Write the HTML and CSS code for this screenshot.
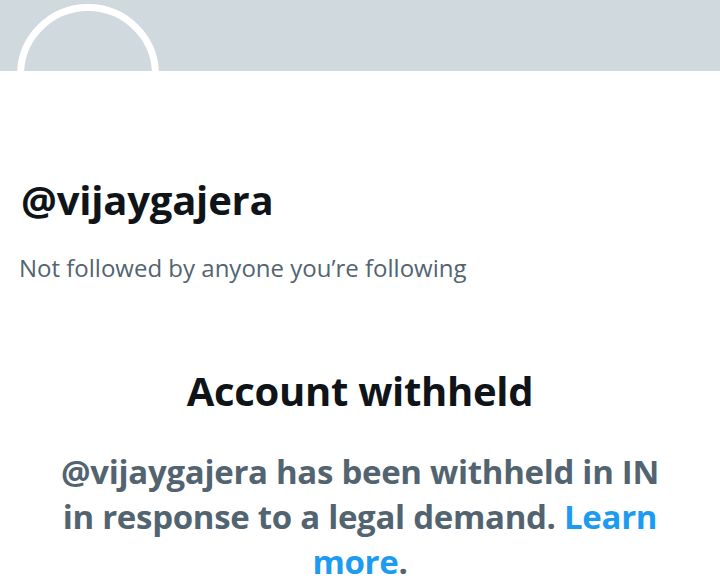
FILE: index.html
```html
<!DOCTYPE html>
<html>
<head>
<meta charset="utf-8">
<link rel="stylesheet" href="styles.css">
</head>
<body>
<div class="page">
  <div class="banner">
    <div class="avatar"></div>
  </div>
  <div class="profile">
    <div class="handle">@vijaygajera</div>
    <div class="followers">Not followed by anyone you’re following</div>
  </div>
  <div class="withheld">
    <div class="title">Account withheld</div>
    <p class="desc">@vijaygajera has been withheld in IN in response to a legal demand. <a class="link" href="#">Learn more</a>.</p>
  </div>
</div>
</body>
</html>
```
FILE: styles.css
```css
html, body {
  margin: 0;
  padding: 0;
  background: #ffffff;
}
.page {
  width: 720px;
  height: 582px;
  overflow: hidden;
  font-family: "Open Sans", "Noto Sans", sans-serif;
}
.banner {
  height: 71px;
  background: #cfd9de;
  position: relative;
  overflow: hidden;
}
.avatar {
  position: absolute;
  left: 17px;
  top: 4px;
  width: 128px;
  height: 128px;
  border: 7px solid #ffffff;
  border-radius: 50%;
  background: #cfd9de;
}
.profile {
  padding: 105px 0 0 21px;
}
.handle {
  font-size: 40px;
  font-weight: 700;
  color: #0f1419;
  line-height: 48px;
  letter-spacing: -0.2px;
}
.followers {
  margin-top: 29px;
  margin-left: -2px;
  font-size: 24px;
  color: #536471;
  line-height: 30px;
}
.withheld {
  text-align: center;
  padding: 84px 56px 0;
}
.title {
  font-size: 40px;
  font-weight: 700;
  color: #0f1419;
  line-height: 48px;
  letter-spacing: -0.3px;
}
.desc {
  margin: 34px 0 0;
  font-size: 33px;
  font-weight: 700;
  color: #536471;
  line-height: 45px;
  letter-spacing: -0.3px;
}
.link {
  color: #1d9bf0;
  text-decoration: none;
}
```
